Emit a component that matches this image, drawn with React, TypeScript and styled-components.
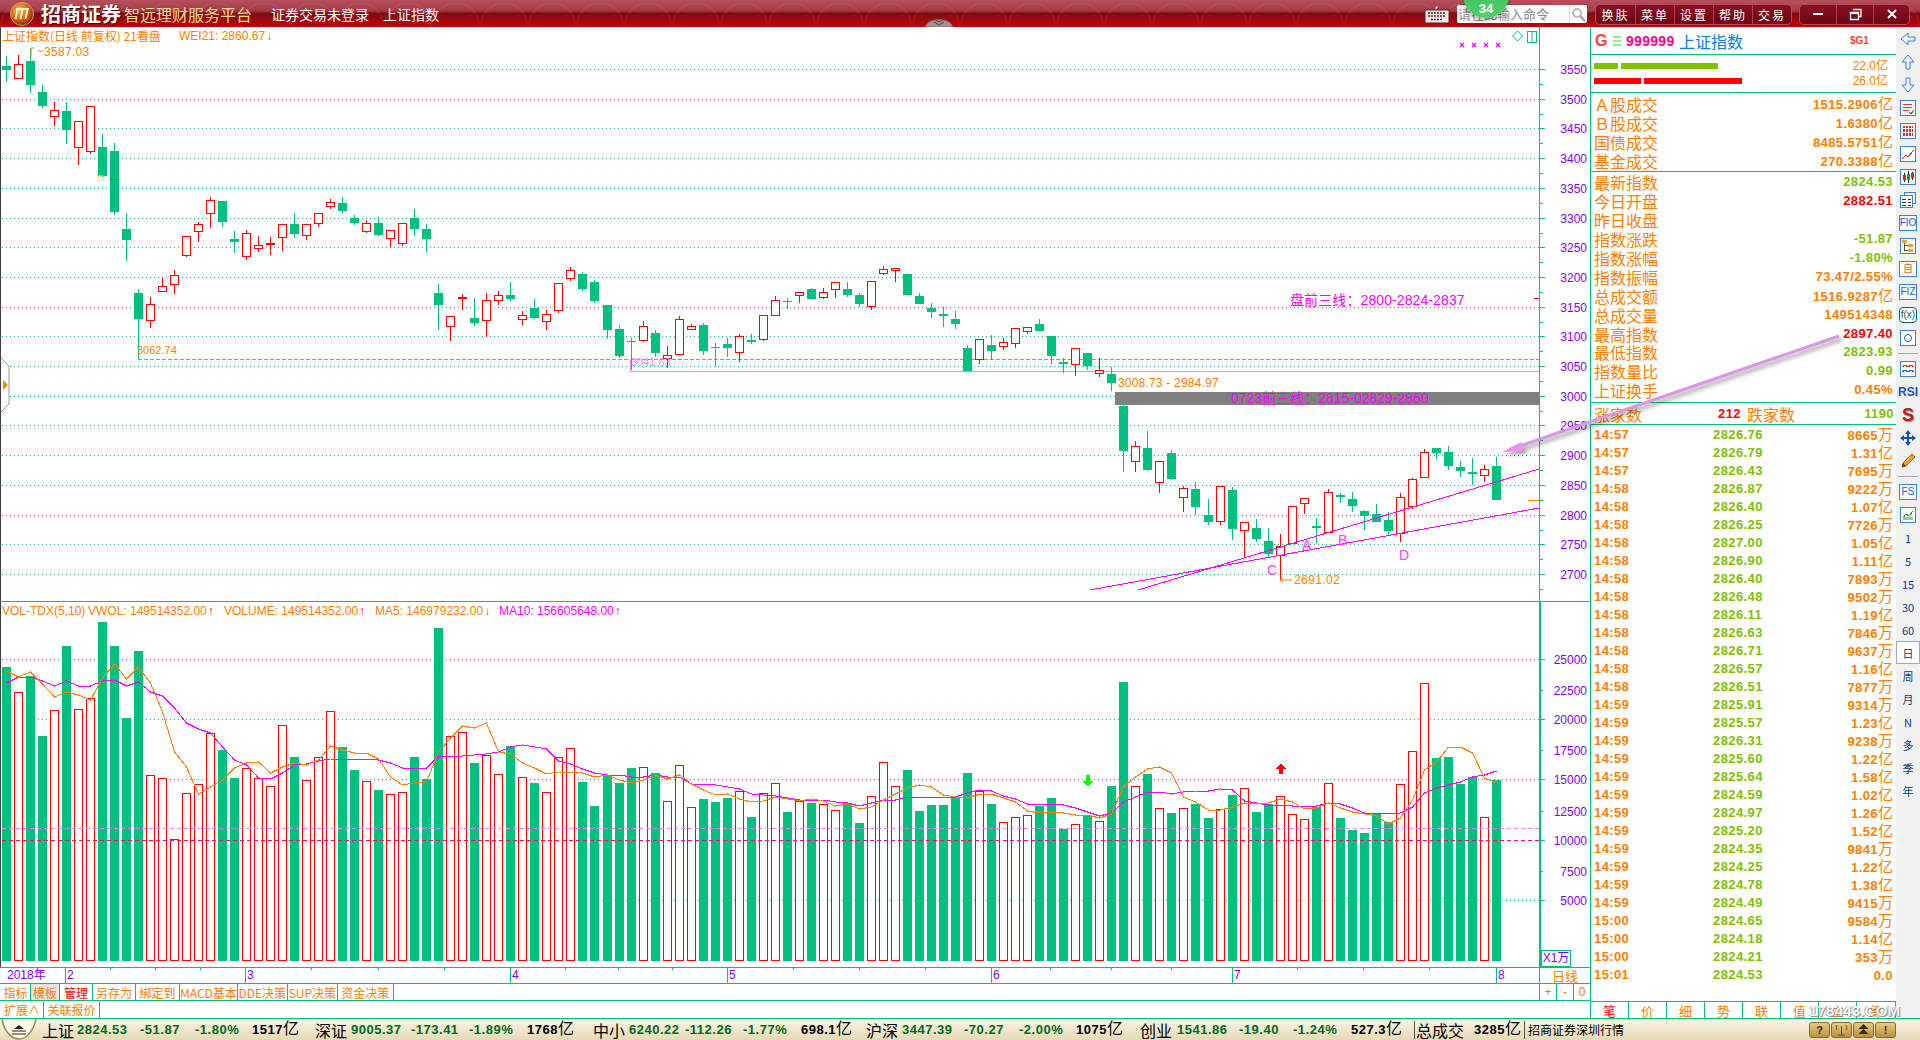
import React from "react";
import styled, { createGlobalStyle } from "styled-components";

const CJK = `"Noto Sans CJK SC", "Liberation Sans", sans-serif`;
const NUM = `"Liberation Sans", "Noto Sans CJK SC", sans-serif`;
const LINE = "#00c080";
const ORANGE = "#ff8000";
const PURPLE = "#8000ff";
const LIME = "#80c000";
const RED = "#ff0000";
const MAGENTA = "#ff00ff";

const GlobalStyle = createGlobalStyle`
  html, body { margin: 0; padding: 0; background: #fff; }
  * { box-sizing: border-box; }
`;

const Page = styled.div`
  position: relative;
  width: 1920px;
  height: 1040px;
  overflow: hidden;
  display: flex;
  flex-direction: column;
  background: #fff;
  font-family: ${CJK};
`;

/* ---------- title bar ---------- */

const TitleBar = styled.div`
  position: relative;
  z-index: 3;
  flex: 0 0 27px;
  display: flex;
  align-items: center;
  padding-left: 10px;
  background:
    radial-gradient(circle at 24px 26px, transparent 22px, rgba(255, 255, 255, 0.07) 23px, transparent 24px) 0 0 / 48px 26px,
    linear-gradient(#b4505c 0, #a53a46 40%, #7c0c12 50%, #a00810 72%, #c40008 100%);
`;

const Logo = styled.svg`
  flex: 0 0 24px;
  width: 24px;
  height: 24px;
  margin-right: 7px;
`;

const Brand = styled.span`
  width: 83px;
  color: #fff;
  font-size: 20px;
  font-weight: 700;
  line-height: 27px;
  white-space: nowrap;
  text-shadow: 1px 1px 1px #400;
`;

const Slogan = styled.span`
  width: 147px;
  color: #ffd890;
  font-size: 16px;
  line-height: 20px;
  white-space: nowrap;
`;

const BarLabel = styled.span<{ $w: number }>`
  width: ${(p) => p.$w}px;
  color: #fff;
  font-size: 14px;
  line-height: 20px;
  white-space: nowrap;
`;

const DrawerHandle = styled.svg`
  position: absolute;
  left: 922px;
  top: 12px;
  width: 34px;
  height: 15px;
`;

const TitleRight = styled.div`
  position: absolute;
  left: 1424px;
  top: 4px;
  display: flex;
  align-items: center;
  height: 20px;
`;

const Keyboard = styled.svg`
  width: 26px;
  height: 19px;
  margin-right: 7px;
`;

const SearchBox = styled.div`
  position: relative;
  width: 130px;
  height: 18px;
  display: flex;
  align-items: center;
  justify-content: space-between;
  background: #fff;
  border-radius: 2px;
  color: #888;
  font-size: 13px;
  line-height: 18px;
  padding-left: 1px;
  white-space: nowrap;
`;

const SearchIconCell = styled.div`
  width: 18px;
  height: 18px;
  border-left: 1px solid #ddd;
  display: flex;
  align-items: center;
  justify-content: center;
`;

const CountBadge = styled.div`
  position: absolute;
  left: 6px;
  top: -33px;
  width: 46px;
  height: 46px;
  border-radius: 50%;
  background: linear-gradient(#3fb55a, #4fd06a);
  box-shadow: 0 2px 5px rgba(0, 0, 0, 0.35);
  display: flex;
  align-items: flex-end;
  justify-content: center;
  padding-bottom: 2px;
  color: #fff;
  font: 700 13px ${NUM};
`;

const ButtonGroup = styled.div<{ $ml: number }>`
  display: flex;
  height: 21px;
  margin-left: ${(p) => p.$ml}px;
  background: linear-gradient(#8a1020, #6c0514);
  border: 1px solid #b84a58;
  border-radius: 5px;
  overflow: hidden;
`;

const GroupButton = styled.div<{ $w: number }>`
  width: ${(p) => p.$w}px;
  display: flex;
  align-items: center;
  justify-content: center;
  color: #fff;
  font-size: 12px;
  letter-spacing: 2px;
  border-left: 1px solid #a84050;
  &:first-child { border-left: none; }
`;

/* ---------- body and chart columns ---------- */

const Body = styled.div`
  flex: 1;
  display: flex;
  min-height: 0;
`;

const ChartColumn = styled.div`
  flex: 0 0 1590px;
  display: flex;
  flex-direction: column;
  min-height: 0;
`;

const PaneRow = styled.div<{ $h: number; $top?: boolean }>`
  flex: 0 0 ${(p) => p.$h}px;
  min-height: 0;
  display: flex;
  ${(p) => (p.$top ? `border-top: 1px solid ${LINE};` : "")}
`;

const Plot = styled.div`
  position: relative;
  flex: 0 0 1539px;
  border-left: 1px solid #404040;
  overflow: hidden;
`;

const DatePlot = styled(Plot)`
  border-left: none;
`;

const AxisBox = styled.div`
  position: relative;
  flex: 0 0 51px;
`;

const ChartSvg = styled.svg`
  display: block;
  width: 100%;
  height: 100%;
  text {
    font-family: ${NUM};
    font-size: 12px;
  }
  .small {
    font-size: 11px;
  }
  .large {
    font-size: 14px;
  }
`;

const Legend = styled.div<{ $top: number }>`
  position: absolute;
  left: 1px;
  top: ${(p) => p.$top}px;
  display: flex;
  font: 12px/16px ${NUM};
  white-space: nowrap;
`;

const LegendItem = styled.span<{ $w: number; $color?: string; $cjk?: boolean }>`
  width: ${(p) => p.$w}px;
  color: ${(p) => p.$color || ORANGE};
  ${(p) => (p.$cjk ? `font-family: ${CJK};` : "")}
`;

const LegendArrow = styled.span<{ $color: string }>`
  color: ${(p) => p.$color};
  font-weight: 700;
  margin-left: 1px;
`;

const Handle = styled.svg`
  position: absolute;
  left: 0;
  top: 331px;
  width: 10px;
  height: 54px;
`;

const UnitBox = styled.div`
  position: absolute;
  left: 2px;
  bottom: 0;
  width: 30px;
  height: 17px;
  border: 1px solid ${LINE};
  color: ${PURPLE};
  background: #fff;
  font: 12px/15px ${NUM};
  text-align: center;
`;

const RangeCell = styled.div`
  flex: 0 0 51px;
  border-left: 1px solid ${LINE};
  display: flex;
  align-items: center;
  justify-content: center;
  color: ${ORANGE};
  font-size: 13px;
  line-height: 15px;
`;

const TabRow = styled.div<{ $h: number }>`
  flex: 0 0 ${(p) => p.$h}px;
  min-height: 0;
  display: flex;
  border-top: 1px solid ${LINE};
`;

const Tabs = styled.div`
  flex: 1;
  display: flex;
  padding-left: 1px;
`;

const Tab = styled.div<{ $w: number; $active?: boolean; $red?: boolean }>`
  flex: 0 0 ${(p) => p.$w}px;
  display: flex;
  align-items: center;
  justify-content: center;
  border-right: 1px solid ${LINE};
  color: ${(p) => (p.$red ? RED : ORANGE)};
  background: ${(p) => (p.$active ? "#e4e4e4" : "#fff")};
  font-size: 12px;
  line-height: 15px;
  white-space: nowrap;
`;

const ZoomCells = styled.div`
  flex: 0 0 51px;
  display: flex;
  border-left: 1px solid ${LINE};
`;

const ZoomCell = styled.div`
  flex: 1;
  display: flex;
  align-items: center;
  justify-content: center;
  color: ${ORANGE};
  font: 12px/15px ${NUM};
  border-left: 1px solid ${LINE};
  &:first-child { border-left: none; }
`;

/* ---------- quote panel ---------- */

const SidePanel = styled.div`
  flex: 0 0 306px;
  min-height: 0;
  display: flex;
  flex-direction: column;
  border-left: 1px solid ${LINE};
`;

const Section = styled.div<{ $h: number; $pt?: number }>`
  flex: 0 0 ${(p) => p.$h}px;
  min-height: 0;
  padding-top: ${(p) => p.$pt || 0}px;
  border-bottom: 1px solid ${LINE};
`;

const CodeHeader = styled.div`
  display: flex;
  align-items: center;
  height: 100%;
  padding: 0 0 0 4px;
  line-height: 18px;
`;

const CodeG = styled.span`
  width: 17px;
  color: #ff4040;
  font: 700 16px/18px ${NUM};
`;

const CodeBars = styled.svg`
  width: 14px;
  height: 10px;
`;

const CodeNum = styled.span`
  width: 53px;
  color: #ff0080;
  font: 700 14px/18px ${NUM};
  letter-spacing: 0.3px;
`;

const CodeName = styled.span`
  width: 171px;
  color: #0080e0;
  font-size: 16px;
  line-height: 18px;
`;

const CodeTag = styled.span`
  color: #ff4040;
  font: 700 10px/18px ${NUM};
`;

const PressureRow = styled.div`
  display: flex;
  align-items: center;
  height: 15px;
  padding: 0 3px;
`;

const Pressure = styled.div<{ $w: number; $color: string }>`
  width: ${(p) => p.$w}px;
  height: 6px;
  margin-right: 3px;
  background: ${(p) => p.$color};
`;

const PressureText = styled.span`
  margin-left: auto;
  padding-right: 5px;
  color: ${ORANGE};
  font: 12px/15px ${NUM};
`;

const QuoteRow = styled.div<{ $h: number }>`
  display: flex;
  align-items: center;
  justify-content: space-between;
  height: ${(p) => p.$h}px;
  padding: 0 3px;
  white-space: nowrap;
`;

const QuoteLabel = styled.span`
  color: ${ORANGE};
  font-size: 16px;
  line-height: 16px;
`;

const QuoteValue = styled.span<{ $color?: string; $w?: number; $push?: boolean }>`
  color: ${(p) => p.$color || ORANGE};
  font: 700 13px/16px ${NUM};
  letter-spacing: 0.4px;
  ${(p) => (p.$w ? `width: ${p.$w}px;` : "")}
  ${(p) => (p.$push ? "margin-left: auto;" : "")}
`;

const Unit = styled.span<{ $size?: number }>`
  font: 400 ${(p) => p.$size || 15}px/16px ${CJK};
  letter-spacing: 0;
`;

const BreadthRow = styled.div`
  display: flex;
  align-items: center;
  height: 100%;
  padding: 0 2px 0 3px;
`;

const BreadthLabel = styled.span<{ $w: number }>`
  width: ${(p) => p.$w}px;
  color: ${ORANGE};
  font-size: 16px;
  line-height: 18px;
`;

const TickList = styled.div`
  flex: 1;
  min-height: 0;
  padding-top: 1px;
`;

const TickRow = styled.div`
  display: grid;
  grid-template-columns: 119px 90px 1fr;
  align-items: center;
  height: 18px;
  padding: 0 3px;
`;

const TickVolume = styled(QuoteValue)`
  text-align: right;
`;

const DetailTabs = styled.div`
  flex: 0 0 17px;
  min-height: 0;
  display: grid;
  grid-template-columns: repeat(7, 38px) 1fr;
  border-top: 1px solid ${LINE};
`;

const DetailTab = styled.div<{ $red?: boolean }>`
  display: flex;
  align-items: center;
  justify-content: center;
  border-right: 1px solid ${LINE};
  color: ${(p) => (p.$red ? RED : ORANGE)};
  font-size: 13px;
  line-height: 15px;
`;

/* ---------- right tool strip ---------- */

const ToolStrip = styled.div`
  flex: 0 0 24px;
  min-height: 0;
  display: flex;
  flex-direction: column;
  background: #f0f0f0;
`;

const Tool = styled.div<{ $selected?: boolean }>`
  flex: 0 0 23px;
  display: flex;
  align-items: center;
  justify-content: center;
  color: #103a80;
  font: 11px/16px ${CJK};
  ${(p) => (p.$selected ? "background: #fff; border: 1px solid #9ab;" : "")}
`;

const ToolSep = styled.div`
  flex: 0 0 8px;
  display: flex;
  align-items: center;
  &::after {
    content: "";
    width: 100%;
    height: 1px;
    margin: 0 2px;
    background: #aaa;
  }
`;

const ToolBox = styled.div<{ $color?: string; $round?: boolean }>`
  width: 18px;
  height: 16px;
  display: flex;
  align-items: center;
  justify-content: center;
  background: #fff;
  border: 1px solid ${(p) => (p.$round ? "#106070" : "#3a80e0")};
  border-radius: ${(p) => (p.$round ? 4 : 0)}px;
  color: ${(p) => p.$color || "#1060d0"};
  font: 10px/14px ${NUM};
`;

const ToolGlyph = styled.span<{ $color: string; $big?: boolean }>`
  color: ${(p) => p.$color};
  font: 700 ${(p) => (p.$big ? 18 : 12)}px/18px ${NUM};
  ${(p) => (p.$big ? "text-shadow: 1px 1px 1px #888;" : "")}
`;

const ToolIcon = styled.svg`
  display: block;
  width: 18px;
  height: 18px;
`;

/* ---------- status bar ---------- */

const StatusBar = styled.div`
  flex: 0 0 22px;
  min-height: 0;
  display: flex;
  align-items: center;
  padding-right: 24px;
  border-top: 1px solid ${LINE};
  background: linear-gradient(#faf4e4, #e6d9b6);
  white-space: nowrap;
`;

const Knob = styled.svg`
  flex: 0 0 42px;
  width: 42px;
  height: 21px;
`;

const StatusCell = styled.span<{ $w: number; $kind: "name" | "num" | "amt" }>`
  flex: 0 0 ${(p) => p.$w}px;
  color: ${(p) => (p.$kind === "num" ? "#006a20" : "#000")};
  font: ${(p) => (p.$kind === "name" ? `400 16px/20px ${CJK}` : `700 13px/20px ${NUM}`)};
  letter-spacing: ${(p) => (p.$kind === "name" ? 0 : 0.5)}px;
`;

const TotalLabel = styled(StatusCell)`
  padding-left: 1px;
`;

const StatusDivider = styled.span`
  flex: 0 0 1px;
  height: 18px;
  background: #555;
`;

const StatusNote = styled.span`
  margin-left: 3px;
  color: #000;
  font-size: 12px;
  line-height: 18px;
`;

const StatusButtons = styled.div`
  margin-left: auto;
  display: flex;
  gap: 1px;
`;

const StatusButton = styled.div`
  width: 21px;
  height: 16px;
  display: flex;
  align-items: center;
  justify-content: center;
  border: 1px solid #8a6a28;
  border-radius: 3px;
  background: linear-gradient(#e8cc80, #b89040);
  color: #3a2a10;
  font: 700 11px/14px ${NUM};
`;

/* ---------- overlays over the whole window ---------- */

const PointerArrow = styled.svg`
  position: absolute;
  left: 1495px;
  top: 330px;
  width: 355px;
  height: 130px;
  filter: drop-shadow(3px 3px 2px rgba(0, 0, 0, 0.4));
`;

const Watermark = styled.div`
  position: absolute;
  left: 1809px;
  top: 1002px;
  color: rgba(255, 255, 255, 0.9);
  font: 700 15px/18px ${NUM};
  letter-spacing: 0.2px;
  text-shadow: 1px 1px 1px #888, -1px 0 1px #aaa;
`;

/* ---------- data, all y values are window pixels ---------- */

type Candle = [number, number, number, number, "g" | "r"];

const CANDLES: Candle[] = [
  [56, 66, 70, 82, "g"], [55, 64, 79, 79, "r"], [48, 61, 85, 93, "g"], [85, 92, 106, 108, "g"], [102, 110, 117, 126, "r"],
  [102, 111, 130, 144, "g"], [121, 121, 148, 165, "r"], [106, 106, 152, 154, "r"], [134, 147, 176, 177, "g"], [143, 151, 212, 215, "g"],
  [213, 229, 240, 261, "g"], [289, 293, 319, 359, "g"], [297, 304, 321, 328, "r"], [278, 286, 292, 292, "r"], [270, 275, 285, 294, "r"],
  [236, 236, 256, 257, "r"], [222, 224, 232, 242, "r"], [197, 200, 214, 228, "r"], [201, 201, 222, 227, "g"], [231, 239, 242, 253, "g"],
  [230, 233, 257, 260, "r"], [236, 245, 249, 252, "r"], [237, 243, 245, 255, "r"], [224, 224, 238, 251, "r"], [213, 224, 234, 238, "g"],
  [224, 224, 236, 240, "r"], [213, 213, 224, 227, "r"], [199, 202, 207, 209, "r"], [197, 203, 211, 213, "g"], [215, 218, 223, 225, "g"],
  [220, 223, 232, 233, "r"], [217, 223, 235, 236, "g"], [230, 230, 239, 247, "r"], [223, 223, 244, 246, "r"], [209, 218, 229, 236, "g"],
  [224, 229, 239, 252, "g"], [284, 293, 305, 330, "g"], [316, 316, 327, 341, "r"], [294, 297, 299, 310, "r"], [298, 318, 323, 326, "g"],
  [293, 300, 321, 337, "r"], [291, 295, 301, 305, "r"], [282, 295, 299, 301, "g"], [311, 315, 320, 325, "r"], [299, 308, 318, 319, "g"],
  [310, 314, 322, 330, "r"], [283, 283, 311, 313, "r"], [267, 270, 279, 281, "r"], [272, 274, 289, 291, "g"], [280, 282, 301, 303, "g"],
  [305, 305, 330, 339, "g"], [325, 329, 356, 358, "g"], [338, 341, 342, 370, "g"], [321, 326, 341, 342, "r"], [330, 333, 353, 357, "g"],
  [346, 355, 359, 368, "r"], [316, 319, 355, 355, "r"], [324, 326, 330, 330, "r"], [323, 325, 351, 355, "g"], [343, 347, 348, 366, "g"],
  [338, 344, 348, 357, "g"], [334, 336, 353, 362, "r"], [334, 340, 342, 344, "g"], [315, 315, 340, 341, "r"], [296, 300, 316, 316, "r"],
  [298, 301, 302, 309, "g"], [292, 292, 296, 303, "r"], [288, 289, 299, 299, "g"], [288, 292, 298, 299, "r"], [282, 282, 290, 298, "r"],
  [282, 289, 295, 297, "g"], [293, 295, 304, 307, "g"], [281, 281, 307, 310, "r"], [266, 269, 274, 275, "r"], [268, 268, 271, 282, "r"],
  [274, 274, 295, 295, "g"], [293, 296, 304, 304, "g"], [303, 308, 312, 318, "g"], [307, 314, 316, 327, "g"], [311, 319, 324, 329, "g"],
  [345, 348, 371, 371, "g"], [339, 339, 360, 364, "r"], [335, 345, 351, 360, "g"], [338, 342, 347, 350, "r"], [328, 328, 344, 348, "r"],
  [327, 327, 332, 334, "r"], [319, 324, 331, 331, "g"], [336, 336, 356, 364, "g"], [358, 362, 364, 373, "g"], [348, 348, 365, 376, "r"],
  [353, 353, 366, 370, "g"], [358, 370, 374, 377, "r"], [367, 374, 383, 391, "g"], [405, 406, 451, 472, "g"], [441, 446, 462, 472, "r"],
  [431, 448, 470, 471, "g"], [461, 461, 483, 493, "r"], [450, 453, 479, 480, "g"], [486, 488, 498, 512, "r"], [482, 489, 507, 515, "g"],
  [499, 515, 522, 525, "g"], [486, 486, 522, 525, "r"], [487, 490, 529, 540, "g"], [522, 522, 531, 558, "r"], [519, 528, 539, 542, "g"],
  [528, 541, 554, 557, "g"], [534, 546, 556, 580, "r"], [506, 506, 544, 544, "r"], [498, 498, 504, 514, "r"], [518, 526, 528, 543, "g"],
  [489, 492, 533, 533, "r"], [493, 495, 497, 503, "g"], [492, 499, 506, 512, "g"], [510, 511, 516, 530, "g"], [504, 514, 522, 522, "g"],
  [512, 520, 531, 536, "g"], [493, 497, 534, 542, "r"], [478, 479, 507, 509, "r"], [449, 452, 478, 478, "r"], [448, 448, 453, 459, "g"],
  [446, 452, 466, 470, "g"], [461, 467, 471, 477, "g"], [458, 472, 474, 485, "g"], [465, 469, 476, 482, "r"], [457, 466, 500, 500, "g"],
];

const crop = (base: number, values: number[]) => values.map((v) => base + v / 3);

const VOL_TOPS = [
  ...crop(600, [
    201, 277, 228, 408, 331, 138, 328, 295, 66, 138, 354, 153, 526, 535, 718, 580, 553, 400, 450, 534,
    505, 535, 559, 376, 471, 540, 471, 334, 441, 510, 544, 570, 583, 577, 471, 537, 84, 409, 397, 489,
    466, 523, 438, 532, 549, 577, 472, 445, 546, 618, 525, 549, 504,
  ]),
  ...crop(640, [
    382, 399, 484, 376, 502, 477, 486, 474, 454, 531, 460, 430, 516, 482, 489, 493, 511, 489, 549, 469,
    367, 439, 390, 513, 495, 495, 471, 399, 454, 492, 547, 532, 526, 498, 474, 567, 553, 525, 544, 438,
    126, 439, 402, 505, 519, 505, 492, 534, 508, 465, 445, 516, 493,
    468, 522, 538, 500, 430, 534, 570, 579, 522, 546, 433, 334, 130, 354, 351, 432, 411, 532, 420,
  ]),
];

const MA5 = [
  ...crop(600, [
    213, 232, 217, 253, 290, 277, 285, 301, 235, 193, 237, 202, 250, 335, 455, 500, 583, 560, 540, 505,
    490, 487, 518, 500, 490, 495, 480, 438, 450, 460, 460, 478, 530, 555, 550, 545, 455, 415, 378, 385,
    370, 455, 462, 490, 503, 522, 515, 515, 520, 530, 524, 540, 550,
  ]),
  ...crop(640, [
    420, 405, 418, 405, 432, 450, 466, 462, 478, 487, 482, 470, 476, 483, 476, 482, 498, 493, 508, 502,
    480, 463, 443, 436, 442, 465, 470, 475, 462, 463, 473, 485, 512, 518, 516, 520, 524, 526, 534, 522,
    440, 410, 388, 382, 398, 470, 485, 510, 511, 500, 490, 492, 490,
    478, 487, 508, 505, 490, 505, 517, 523, 527, 553, 535, 480, 390, 365, 322, 322, 340, 415, 430,
  ]),
];

const MA10 = [
  ...crop(600, [
    248, 232, 232, 243, 259, 244, 258, 258, 243, 240, 257, 245, 275, 288, 325, 370, 388, 400, 440, 480,
    495, 535, 538, 520, 495, 493, 483, 478, 478, 477, 477, 481, 490, 505, 505, 505, 467, 470, 469, 466,
    462, 456, 440, 436, 442, 448, 484, 492, 507, 518, 524, 526, 532,
  ]),
  ...crop(640, [
    410, 405, 410, 410, 432, 433, 436, 440, 447, 462, 464, 468, 474, 480, 481, 481, 485, 490, 497, 490,
    480, 481, 470, 471, 471, 471, 470, 458, 451, 452, 468, 478, 493, 493, 491, 495, 503, 515, 527, 520,
    485, 470, 457, 457, 462, 456, 452, 452, 448, 450, 482, 490, 495,
    496, 498, 498, 498, 490, 492, 503, 518, 518, 523, 520, 500, 460, 445, 435, 427, 412, 405, 394,
  ]),
];

const PRICE_LEVELS = [3550, 3500, 3450, 3400, 3350, 3300, 3250, 3200, 3150, 3100, 3050, 3000, 2950, 2900, 2850, 2800, 2750, 2700];
const PRICE_YS = [69, 99, 128, 158, 188, 218, 247, 277, 307, 336, 366, 396, 425, 455, 485, 515, 544, 574];

const VOL_LEVELS: [number, number, boolean][] = [
  [25000, 659, true], [22500, 690, false], [20000, 719, true], [17500, 750, false], [15000, 779, true],
  [12500, 811, false], [10000, 840, true], [7500, 871, false], [5000, 900, true],
];

const MONTHS: [string, number][] = [["2", 65], ["3", 245], ["4", 510], ["5", 727], ["6", 991], ["7", 1232], ["8", 1496]];
const DATE_TICKS = [110, 155, 200, 311, 378, 444, 565, 618, 672, 793, 859, 925, 1050, 1111, 1171, 1297, 1363, 1429];

const TABS_TOP: [string, number, boolean?, boolean?][] = [
  ["指标", 30], ["模板", 29, true], ["管理", 33, false, true], ["另存为", 43], ["绑定到", 44],
  ["MACD基本", 56], ["DDE决策", 50], ["SUP决策", 50], ["资金决策", 56],
];

const TURNOVER: [string, string, string][] = [
  ["Ａ股成交", "1515.2906", "亿"], ["Ｂ股成交", "1.6380", "亿"], ["国债成交", "8485.5751", "亿"], ["基金成交", "270.3388", "亿"],
];

const INDEX_ROWS: [string, string, string, string?][] = [
  ["最新指数", "2824.53", LIME], ["今日开盘", "2882.51", RED], ["昨日收盘", "", LIME], ["指数涨跌", "-51.87", LIME],
  ["指数涨幅", "-1.80%", LIME], ["指数振幅", "73.47/2.55%", ORANGE], ["总成交额", "1516.9287", ORANGE, "亿"], ["总成交量", "149514348", ORANGE],
  ["最高指数", "2897.40", RED], ["最低指数", "2823.93", LIME], ["指数量比", "0.99", LIME], ["上证换手", "0.45%", ORANGE],
];

const TICKS: [string, string, string, string][] = [
  ["14:57", "2826.76", "8665", "万"], ["14:57", "2826.79", "1.31", "亿"], ["14:57", "2826.43", "7695", "万"], ["14:58", "2826.87", "9222", "万"],
  ["14:58", "2826.40", "1.07", "亿"], ["14:58", "2826.25", "7726", "万"], ["14:58", "2827.00", "1.05", "亿"], ["14:58", "2826.90", "1.11", "亿"],
  ["14:58", "2826.40", "7893", "万"], ["14:58", "2826.48", "9502", "万"], ["14:58", "2826.11", "1.19", "亿"], ["14:58", "2826.63", "7846", "万"],
  ["14:58", "2826.71", "9637", "万"], ["14:58", "2826.57", "1.16", "亿"], ["14:58", "2826.51", "7877", "万"], ["14:59", "2825.91", "9314", "万"],
  ["14:59", "2825.57", "1.23", "亿"], ["14:59", "2826.31", "9238", "万"], ["14:59", "2825.60", "1.22", "亿"], ["14:59", "2825.64", "1.58", "亿"],
  ["14:59", "2824.59", "1.02", "亿"], ["14:59", "2824.97", "1.26", "亿"], ["14:59", "2825.20", "1.52", "亿"], ["14:59", "2824.35", "9841", "万"],
  ["14:59", "2824.25", "1.22", "亿"], ["14:59", "2824.78", "1.38", "亿"], ["14:59", "2824.49", "9415", "万"], ["15:00", "2824.65", "9584", "万"],
  ["15:00", "2824.18", "1.14", "亿"], ["15:00", "2824.21", "353", "万"], ["15:01", "2824.53", "0.0", ""],
];

type StatusKind = "name" | "num" | "amt";
const STATUS: [string, number, StatusKind][] = [
  ["上证", 35, "name"], ["2824.53", 63, "num"], ["-51.87", 55, "num"], ["-1.80%", 57, "num"], ["1517亿", 63, "amt"],
  ["深证", 36, "name"], ["9005.37", 60, "num"], ["-173.41", 58, "num"], ["-1.89%", 58, "num"], ["1768亿", 66, "amt"],
  ["中小", 36, "name"], ["6240.22", 56, "num"], ["-112.26", 58, "num"], ["-1.77%", 58, "num"], ["698.1亿", 65, "amt"],
  ["沪深", 36, "name"], ["3447.39", 62, "num"], ["-70.27", 55, "num"], ["-2.00%", 57, "num"], ["1075亿", 64, "amt"],
  ["创业", 37, "name"], ["1541.86", 62, "num"], ["-19.40", 54, "num"], ["-1.24%", 58, "num"], ["527.3亿", 63, "amt"],
];

const barLeft = (i: number) => Math.floor(2 + 12.02 * i);
const barCenter = (i: number) => barLeft(i) + 4.5;
const maPoints = (ys: number[]) => ys.map((y, i) => `${barCenter(i)},${Math.round(y)}`).join(" ");

/* ---------- chart drawings ---------- */

const PriceChart = () => (
  <ChartSvg viewBox="1 27 1538 574" shapeRendering="crispEdges">
    {PRICE_YS.map((y) => (
      <line key={y} x1={2} x2={1539} y1={y + 0.5} y2={y + 0.5} stroke={LINE} strokeDasharray="1 3" />
    ))}
    <line x1={138} x2={1539} y1={359.5} y2={359.5} stroke={ORANGE} strokeDasharray="4 2" />
    <line x1={630} x2={1539} y1={371.5} y2={371.5} stroke="#ff80ff" />
    <line x1={630.5} x2={630.5} y1={359} y2={371} stroke="#ff80ff" />
    {CANDLES.map(([hi, top, bot, lo, kind], i) => {
      const left = barLeft(i);
      const color = kind === "g" ? LINE : RED;
      return (
        <g key={i}>
          <line x1={left + 4.5} x2={left + 4.5} y1={hi} y2={lo} stroke={color} />
          {kind === "g" ? (
            <rect x={left} y={top} width={9} height={Math.max(bot - top, 1)} fill={color} />
          ) : (
            <rect x={left + 0.5} y={top + 0.5} width={8} height={Math.max(bot - top - 1, 1)} fill="#fff" stroke={color} />
          )}
        </g>
      );
    })}
    <line x1={110} x2={119} y1={179.5} y2={179.5} stroke={MAGENTA} />
    <circle cx={101} cy={178} r={3} fill="none" stroke="#f0e040" strokeDasharray="2 1" />
    <rect x={1115} y={392} width={424} height={13} fill="#808080" />
    <line x1={1090} y1={590} x2={1539} y2={508} stroke={MAGENTA} />
    <line x1={1138} y1={590} x2={1539} y2={469} stroke={MAGENTA} />
    <line x1={1528} x2={1539} y1={500.5} y2={500.5} stroke={ORANGE} />
    <line x1={1534} x2={1539} y1={298.5} y2={298.5} stroke={RED} />
    <g shapeRendering="auto">
      <path d="M31 56V48M31 48h3M38 50l2 1.5 3-1" fill="none" stroke={ORANGE} />
      <text x={44} y={56} fill={ORANGE} letterSpacing="0.3">3587.03</text>
      <text x={137} y={354} fill={ORANGE} className="small">3062.74</text>
      <text x={631} y={366} fill="#ff80ff" className="small">3041.63</text>
      <text x={1118} y={387} fill={ORANGE} letterSpacing="0.2">3008.73 - 2984.97</text>
      <text x={1231} y={403} fill={MAGENTA} className="large">0723前三线：2815-02829-2860</text>
      <text x={1290} y={305} fill={MAGENTA} className="large" letterSpacing="0.1">盘前三线：2800-2824-2837</text>
      <path d="M1280 580h12M1280 580l3-2M1280 580l3 2" fill="none" stroke={ORANGE} />
      <text x={1294} y={584} fill={ORANGE} letterSpacing="0.4">2691.02</text>
      <text x={1302} y={550} fill="#ff40ff" className="large">A</text>
      <text x={1338} y={545} fill="#ff40ff" className="large">B</text>
      <text x={1267} y={575} fill="#ff40ff" className="large">C</text>
      <text x={1399} y={560} fill="#ff40ff" className="large">D</text>
      {[1462, 1474, 1486, 1498].map((x) => (
        <path key={x} d={`M${x - 2} 43l4 4M${x + 2} 43l-4 4`} stroke={MAGENTA} strokeWidth="1.2" />
      ))}
      <path d="M1517.5 31l5 5-5 5-5-5z" fill="none" stroke={LINE} />
      <rect x={1527.5} y={31.5} width={9} height={11} fill="none" stroke={LINE} />
      <line x1={1532} x2={1532} y1={31.5} y2={42.5} stroke={LINE} />
    </g>
  </ChartSvg>
);

const PriceAxis = () => (
  <ChartSvg viewBox="1539 27 51 574" shapeRendering="crispEdges">
    <line x1={1539.5} x2={1539.5} y1={27} y2={601} stroke={LINE} />
    {PRICE_LEVELS.map((level, i) => {
      const y = PRICE_YS[i];
      return (
        <g key={level}>
          <line x1={1540} x2={1545} y1={y + 0.5} y2={y + 0.5} stroke={LINE} />
          <line x1={1540} x2={1543} y1={y + 15.5} y2={y + 15.5} stroke={LINE} />
          <text x={1587} y={y + 5} fill={PURPLE} textAnchor="end" shapeRendering="auto">{level}</text>
        </g>
      );
    })}
  </ChartSvg>
);

const VolumeChart = () => (
  <ChartSvg viewBox="1 602 1538 365" shapeRendering="crispEdges">
    {[659, 719, 779, 900].map((y) => (
      <line key={y} x1={2} x2={1539} y1={y + 0.5} y2={y + 0.5} stroke={LINE} strokeDasharray="1 3" />
    ))}
    {VOL_TOPS.map((top, i) => {
      const left = barLeft(i);
      const y = Math.round(top);
      return CANDLES[i][4] === "g" ? (
        <rect key={i} x={left} y={y} width={9} height={961 - y} fill={LINE} />
      ) : (
        <rect key={i} x={left + 0.5} y={y + 0.5} width={8} height={960 - y} fill="#fff" stroke={RED} />
      );
    })}
    <line x1={2} x2={1539} y1={828.5} y2={828.5} stroke="#ff80ff" strokeDasharray="4 3" />
    <line x1={2} x2={1539} y1={840.5} y2={840.5} stroke="#ff0080" strokeDasharray="4 3" />
    <polyline points={maPoints(MA10)} fill="none" stroke={MAGENTA} />
    <polyline points={maPoints(MA5)} fill="none" stroke={ORANGE} />
    <path d="M1086 775h4v6h3l-5 6-5-6h3z" fill="#00ff00" />
    <path d="M1281 763l5 6h-3v5h-4v-5h-3z" fill={RED} />
  </ChartSvg>
);

const VolumeAxis = () => (
  <ChartSvg viewBox="1539 602 51 365" shapeRendering="crispEdges">
    <line x1={1540} x2={1540} y1={602} y2={967} stroke={LINE} strokeWidth="2" />
    {VOL_LEVELS.map(([level, y, major]) => (
      <g key={level}>
        <line x1={1541} x2={major ? 1545 : 1543} y1={y + 0.5} y2={y + 0.5} stroke={LINE} />
        <text x={1587} y={y + 5} fill={PURPLE} textAnchor="end" shapeRendering="auto">{level}</text>
      </g>
    ))}
  </ChartSvg>
);

const DateAxis = () => (
  <ChartSvg viewBox="0 968 1539 15" shapeRendering="crispEdges">
    <text x={7} y={979} fill={PURPLE}>2018年</text>
    {DATE_TICKS.map((x) => (
      <line key={x} x1={x + 0.5} x2={x + 0.5} y1={968} y2={970} stroke={LINE} />
    ))}
    {MONTHS.map(([label, x]) => (
      <g key={label}>
        <line x1={x + 0.5} x2={x + 0.5} y1={968} y2={983} stroke={LINE} />
        <text x={x + 2} y={979} fill={PURPLE}>{label}</text>
      </g>
    ))}
  </ChartSvg>
);

/* ---------- tool strip ---------- */

const BLUE = "#3a80e0";

const ArrowTool = ({ d }: { d: string }) => (
  <ToolIcon viewBox="0 0 18 18">
    <path d={d} fill="#eef4ff" stroke={BLUE} />
  </ToolIcon>
);

const BoxTool = ({ children }: { children: React.ReactNode }) => (
  <ToolIcon viewBox="0 0 18 18" shapeRendering="crispEdges">
    <rect x={1.5} y={1.5} width={15} height={15} fill="#fff" stroke={BLUE} />
    {children}
  </ToolIcon>
);

const ToolStripView = () => (
  <ToolStrip>
    <Tool><ArrowTool d="M2 9l7-6v4h7v4H9v4z" /></Tool>
    <Tool><ArrowTool d="M9 2l6 7h-4v7H7V9H3z" /></Tool>
    <Tool><ArrowTool d="M9 16l6-7h-4V2H7v7H3z" /></Tool>
    <Tool>
      <BoxTool>
        <path d="M4 5h9" stroke="#e03030" />
        <path d="M4 8h9" stroke="#20a040" />
        <path d="M4 11h6" stroke="#e03030" />
        <path d="M10 13l2 2 3-4" fill="none" stroke="#555" />
      </BoxTool>
    </Tool>
    <Tool>
      <BoxTool>
        <path d="M4 5h10M4 9h10M4 13h10" stroke="#e03030" strokeWidth="2" strokeDasharray="2 1" />
        <path d="M4 7h10M4 11h10" stroke="#1060c0" strokeDasharray="2 1" />
      </BoxTool>
    </Tool>
    <Tool>
      <BoxTool>
        <path d="M3 14l4-4 2 2 6-7" fill="none" stroke="#e03030" />
      </BoxTool>
    </Tool>
    <Tool>
      <BoxTool>
        <path d="M5 5v9M9 3v12M13 4v8" stroke="#222" />
        <path d="M4 7h3v5H4zM12 5h3v5h-3z" fill="#e02020" />
        <path d="M8 6h3v6H8z" fill="#10a040" />
      </BoxTool>
    </Tool>
    <Tool>
      <ToolIcon viewBox="0 0 18 18" shapeRendering="crispEdges">
        <rect x={5.5} y={1.5} width={11} height={11} fill="#fff" stroke={BLUE} />
        <rect x={1.5} y={4.5} width={12} height={12} fill="#fff" stroke={BLUE} />
        <path d="M3 8h4M9 8h3M3 11h4M9 11h3M3 14h4M9 14h3" stroke="#333" />
      </ToolIcon>
    </Tool>
    <Tool><ToolBox>FIO</ToolBox></Tool>
    <Tool>
      <BoxTool>
        <path d="M5 4v9h4M5 8h4" fill="none" stroke="#555" />
        <rect x={3} y={3} width={5} height={3} fill="#f0a030" />
        <rect x={9} y={7} width={5} height={3} fill="#f0a030" />
        <rect x={9} y={12} width={5} height={3} fill="#f0a030" />
      </BoxTool>
    </Tool>
    <Tool><ToolBox $color="#f06020">自</ToolBox></Tool>
    <Tool><ToolBox>FIZ</ToolBox></Tool>
    <Tool><ToolBox $color="#106070" $round>f(x)</ToolBox></Tool>
    <Tool>
      <BoxTool><circle cx={9} cy={9} r={3.5} fill="none" stroke="#1060c0" shapeRendering="auto" /></BoxTool>
    </Tool>
    <ToolSep />
    <Tool>
      <BoxTool>
        <path d="M3 7l3-2 3 2 3-2 3 2" fill="none" stroke="#e03030" />
        <path d="M3 12l3-2 3 2 3-2 3 2" fill="none" stroke="#1060c0" />
      </BoxTool>
    </Tool>
    <Tool><ToolGlyph $color="#2050d0">RSI</ToolGlyph></Tool>
    <Tool><ToolGlyph $color="#c02020" $big>S</ToolGlyph></Tool>
    <Tool>
      <ToolIcon viewBox="0 0 18 18">
        <path d="M9 1l3 4h-2v3h3V6l4 3-4 3v-2h-3v3h2l-3 4-3-4h2v-3H5v2L1 9l4-3v2h3V5H6z" fill="#1050c0" />
      </ToolIcon>
    </Tool>
    <Tool>
      <ToolIcon viewBox="0 0 18 18">
        <path d="M13 2l3 3-9 9-4 1 1-4z" fill="#f0a040" stroke="#a06020" />
        <path d="M3 15l1-4 3 3z" fill="#604020" />
      </ToolIcon>
    </Tool>
    <ToolSep />
    <Tool><ToolBox>FS</ToolBox></Tool>
    <Tool>
      <BoxTool>
        <path d="M4 12l3-4 3 2 4-5" fill="none" stroke="#20a040" />
        <rect x={4} y={11} width={10} height={3} fill="#90d090" />
      </BoxTool>
    </Tool>
    {["1", "5", "15", "30", "60"].map((t) => <Tool key={t}>{t}</Tool>)}
    <Tool $selected>日</Tool>
    {["周", "月", "N", "多", "季", "年"].map((t) => <Tool key={t}>{t}</Tool>)}
  </ToolStrip>
);

/* ---------- page ---------- */

export default function App() {
  return (
    <Page>
      <GlobalStyle />
      <TitleBar>
        <Logo viewBox="0 0 24 24">
          <defs>
            <radialGradient id="logoFill" cx="40%" cy="35%" r="70%">
              <stop offset="0" stopColor="#f8c050" />
              <stop offset="0.6" stopColor="#d86010" />
              <stop offset="1" stopColor="#6a2008" />
            </radialGradient>
          </defs>
          <circle cx={12} cy={12} r={11.5} fill="url(#logoFill)" stroke="#c8a070" />
          <path d="M7.5 7l-2 10M12.5 7l-2 10M17.5 7l-2 10M6 7h13" fill="none" stroke="#fff4d0" strokeWidth="1.8" />
        </Logo>
        <Brand>招商证券</Brand>
        <Slogan>智远理财服务平台</Slogan>
        <BarLabel $w={112}>证券交易未登录</BarLabel>
        <BarLabel $w={56}>上证指数</BarLabel>
        <DrawerHandle viewBox="0 0 34 15">
          <path d="M3 15C6 5 28 5 31 15z" fill="#a89090" stroke="#806060" />
          <path d="M12 10l5 3 5-3M12 7l5 3 5-3" fill="none" stroke="#444" />
        </DrawerHandle>
        <TitleRight>
          <Keyboard viewBox="0 0 26 19">
            <path d="M12 5V2h2" fill="none" stroke="#fff" />
            <rect x={1} y={5} width={24} height={13} fill="#f4e8e8" stroke="#5a2020" />
            <path d="M4 8h18M4 11h18M7 14.5h12" stroke="#5a2020" strokeWidth="1.5" strokeDasharray="2 1" />
          </Keyboard>
          <SearchBox>
            请在此输入命令
            <CountBadge>34</CountBadge>
            <SearchIconCell>
              <svg width="15" height="15" viewBox="0 0 15 15">
                <circle cx={6} cy={6} r={4} fill="none" stroke="#bbb" strokeWidth="2" />
                <path d="M9 9l5 5" stroke="#aaa" strokeWidth="2.5" />
              </svg>
            </SearchIconCell>
          </SearchBox>
          <ButtonGroup $ml={8}>
            {["换肤", "菜单", "设置", "帮助", "交易"].map((t) => (
              <GroupButton key={t} $w={39}>{t}</GroupButton>
            ))}
          </ButtonGroup>
          <ButtonGroup $ml={7}>
            <GroupButton $w={36}>
              <svg width="12" height="12" viewBox="0 0 12 12"><path d="M1 6h10" stroke="#fff" strokeWidth="2" /></svg>
            </GroupButton>
            <GroupButton $w={37}>
              <svg width="13" height="13" viewBox="0 0 13 13">
                <path d="M4 1.5h8v7H9.5M1.5 4.5h8v7h-8z" fill="none" stroke="#fff" strokeWidth="1.3" />
                <path d="M1 5h9" stroke="#fff" strokeWidth="2" />
              </svg>
            </GroupButton>
            <GroupButton $w={36}>
              <svg width="12" height="12" viewBox="0 0 12 12"><path d="M2 2l8 8M10 2l-8 8" stroke="#fff" strokeWidth="2" /></svg>
            </GroupButton>
          </ButtonGroup>
        </TitleRight>
      </TitleBar>

      <Body>
        <ChartColumn>
          <PaneRow $h={574}>
            <Plot>
              <PriceChart />
              <Legend $top={1}>
                <LegendItem $w={177} $cjk>上证指数(日线 前复权) 21看盘</LegendItem>
                <LegendItem $w={110}>
                  WEI21: 2860.67<LegendArrow $color={LINE}>↓</LegendArrow>
                </LegendItem>
              </Legend>
              <Handle viewBox="0 0 10 54">
                <path d="M0 0l8 8v38l-8 8" fill="#fff" stroke="#999" />
                <path d="M2 22l5 5-5 5z" fill="#e09000" />
              </Handle>
            </Plot>
            <AxisBox><PriceAxis /></AxisBox>
          </PaneRow>
          <PaneRow $h={366} $top>
            <Plot>
              <VolumeChart />
              <Legend $top={1}>
                <LegendItem $w={86}>VOL-TDX(5,10)</LegendItem>
                <LegendItem $w={136}>VWOL: 149514352.00<LegendArrow $color={RED}>↑</LegendArrow></LegendItem>
                <LegendItem $w={151}>VOLUME: 149514352.00<LegendArrow $color={RED}>↑</LegendArrow></LegendItem>
                <LegendItem $w={124}>MA5: 146979232.00<LegendArrow $color={LINE}>↓</LegendArrow></LegendItem>
                <LegendItem $w={130} $color={MAGENTA}>MA10: 156605648.00<LegendArrow $color={RED}>↑</LegendArrow></LegendItem>
              </Legend>
            </Plot>
            <AxisBox>
              <VolumeAxis />
              <UnitBox>X1万</UnitBox>
            </AxisBox>
          </PaneRow>
          <PaneRow $h={16} $top>
            <DatePlot><DateAxis /></DatePlot>
            <RangeCell>日线</RangeCell>
          </PaneRow>
          <TabRow $h={17}>
            <Tabs>
              {TABS_TOP.map(([label, w, active, red]) => (
                <Tab key={label} $w={w} $active={active} $red={red}>{label}</Tab>
              ))}
            </Tabs>
            <ZoomCells>
              <ZoomCell>+</ZoomCell>
              <ZoomCell>-</ZoomCell>
              <ZoomCell>0</ZoomCell>
            </ZoomCells>
          </TabRow>
          <TabRow $h={18}>
            <Tabs>
              <Tab $w={43}>扩展∧</Tab>
              <Tab $w={56}>关联报价</Tab>
            </Tabs>
          </TabRow>
        </ChartColumn>

        <SidePanel>
          <Section $h={28}>
            <CodeHeader>
              <CodeG>G</CodeG>
              <CodeBars viewBox="0 0 14 10">
                <path d="M1 1h8M1 5h8M1 9h8" stroke="#20e020" strokeWidth="1" />
              </CodeBars>
              <CodeNum>999999</CodeNum>
              <CodeName>上证指数</CodeName>
              <CodeTag>$G1</CodeTag>
            </CodeHeader>
          </Section>
          <Section $h={38} $pt={3}>
            <PressureRow>
              <Pressure $w={24} $color={LIME} />
              <Pressure $w={97} $color={LIME} />
              <PressureText>22.0<Unit $size={12}>亿</Unit></PressureText>
            </PressureRow>
            <PressureRow>
              <Pressure $w={47} $color={RED} />
              <Pressure $w={98} $color={RED} />
              <PressureText>26.0<Unit $size={12}>亿</Unit></PressureText>
            </PressureRow>
          </Section>
          <Section $h={79} $pt={1}>
            {TURNOVER.map(([label, value, unit]) => (
              <QuoteRow key={label} $h={19}>
                <QuoteLabel>{label}</QuoteLabel>
                <QuoteValue>{value}<Unit>{unit}</Unit></QuoteValue>
              </QuoteRow>
            ))}
          </Section>
          <Section $h={231} $pt={1}>
            {INDEX_ROWS.map(([label, value, color, unit]) => (
              <QuoteRow key={label} $h={18.9}>
                <QuoteLabel>{label}</QuoteLabel>
                <QuoteValue $color={color}>{value}{unit && <Unit>{unit}</Unit>}</QuoteValue>
              </QuoteRow>
            ))}
          </Section>
          <Section $h={22}>
            <BreadthRow>
              <BreadthLabel $w={124}>涨家数</BreadthLabel>
              <QuoteValue $color={RED} $w={29}>212</QuoteValue>
              <BreadthLabel $w={117}>跌家数</BreadthLabel>
              <QuoteValue $color={LIME} $push>1190</QuoteValue>
            </BreadthRow>
          </Section>
          <TickList>
            {TICKS.map(([time, price, volume, unit], i) => (
              <TickRow key={i}>
                <QuoteValue>{time}</QuoteValue>
                <QuoteValue $color={LIME}>{price}</QuoteValue>
                <TickVolume>{volume}<Unit>{unit}</Unit></TickVolume>
              </TickRow>
            ))}
          </TickList>
          <DetailTabs>
            {["笔", "价", "细", "势", "联", "值", "主", "筹"].map((t, i) => (
              <DetailTab key={t} $red={i === 0}>{t}</DetailTab>
            ))}
          </DetailTabs>
        </SidePanel>

        <ToolStripView />
      </Body>

      <StatusBar>
        <Knob viewBox="0 0 42 21">
          <path d="M2 0c2 13 10 20 17 20s14-7 17-20" fill="#fff8e8" stroke="#a08850" strokeWidth="1.5" />
          <path d="M19 6l5 4H14z" fill="#222" />
          <path d="M12 12h14M12 15h14" stroke="#222" />
        </Knob>
        {STATUS.map(([text, w, kind], i) => (
          <StatusCell key={i} $w={w} $kind={kind}>
            {kind === "amt" ? (
              <>
                {text.slice(0, -1)}
                <Unit $size={16}>{text.slice(-1)}</Unit>
              </>
            ) : (
              text
            )}
          </StatusCell>
        ))}
        <StatusDivider />
        <TotalLabel $w={59} $kind="name">总成交</TotalLabel>
        <StatusCell $w={50} $kind="amt">3285<Unit $size={16}>亿</Unit></StatusCell>
        <StatusDivider />
        <StatusNote>招商证券深圳行情</StatusNote>
        <StatusButtons>
          <StatusButton>?</StatusButton>
          <StatusButton>
            <svg width="13" height="13" viewBox="0 0 13 13">
              <path d="M6.5 3v9M3 12h7M2 2c-1 2-1 4 0 5M11 2c1 2 1 4 0 5" fill="none" stroke="#6a5020" />
            </svg>
          </StatusButton>
          <StatusButton>
            <svg width="13" height="13" viewBox="0 0 13 13">
              <path d="M6.5 1l5 5h-10zM6.5 6l5 5h-10z" fill="#3a2a10" />
            </svg>
          </StatusButton>
          <StatusButton>!</StatusButton>
        </StatusButtons>
      </StatusBar>

      <PointerArrow viewBox="0 0 355 130">
        <path d="M344 6L22 117" stroke="#d898e4" strokeWidth="3" />
        <path d="M7 122l19-10 1 5 1 4z" fill="#ee90f0" />
      </PointerArrow>
      <Watermark>178443.COM</Watermark>
    </Page>
  );
}
